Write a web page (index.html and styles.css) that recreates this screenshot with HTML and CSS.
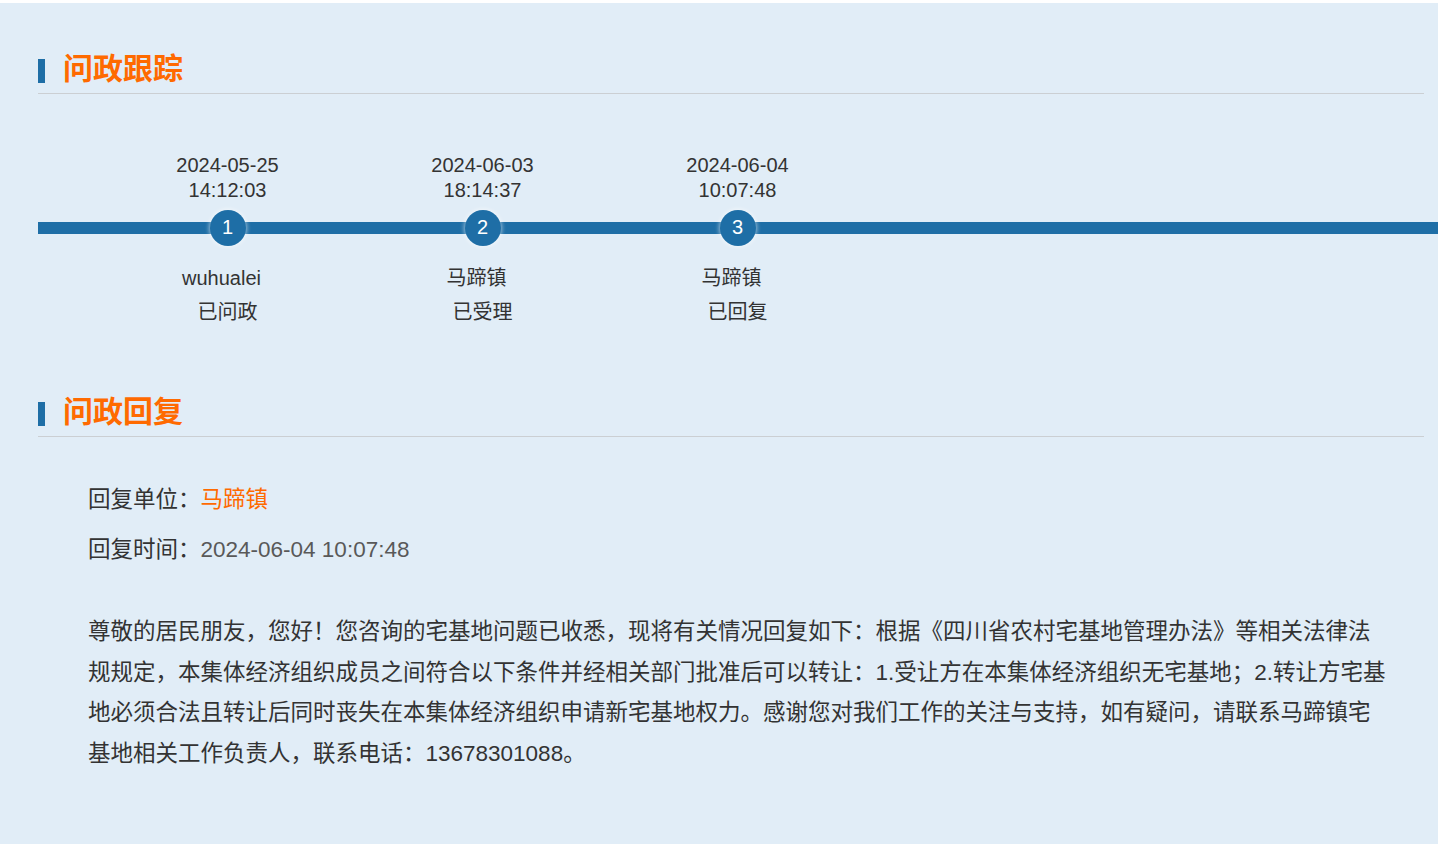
FILE: index.html
```html
<!DOCTYPE html>
<html lang="zh-CN">
<head>
<meta charset="utf-8">
<title>问政跟踪</title>
<link rel="stylesheet" href="styles.css">
</head>
<body>
<div class="page">
  <div class="section-head first">
    <span class="bar"></span>
    <h2 class="title">问政跟踪</h2>
  </div>

  <div class="timeline">
    <div class="step">
      <div class="date">2024-05-25<br>14:12:03</div>
      <div class="dot">1</div>
      <div class="name">wuhualei</div>
      <div class="status">已问政</div>
    </div>
    <div class="step">
      <div class="date">2024-06-03<br>18:14:37</div>
      <div class="dot">2</div>
      <div class="name">马蹄镇</div>
      <div class="status">已受理</div>
    </div>
    <div class="step">
      <div class="date">2024-06-04<br>10:07:48</div>
      <div class="dot">3</div>
      <div class="name">马蹄镇</div>
      <div class="status">已回复</div>
    </div>
  </div>

  <div class="section-head second">
    <span class="bar"></span>
    <h2 class="title">问政回复</h2>
  </div>

  <div class="reply">
    <div class="info-row"><span class="label">回复单位：</span><span class="unit">马蹄镇</span></div>
    <div class="info-row"><span class="label">回复时间：</span><span class="time">2024-06-04 10:07:48</span></div>
    <p class="content">尊敬的居民朋友，您好！您咨询的宅基地问题已收悉，现将有关情况回复如下：根据《四川省农村宅基地管理办法》等相关法律法规规定，本集体经济组织成员之间符合以下条件并经相关部门批准后可以转让：1.受让方在本集体经济组织无宅基地；2.转让方宅基地必须合法且转让后同时丧失在本集体经济组织申请新宅基地权力。感谢您对我们工作的关注与支持，如有疑问，请联系马蹄镇宅基地相关工作负责人，联系电话：13678301088。</p>
  </div>
</div>
</body>
</html>
```

FILE: styles.css
```css
html, body {
  margin: 0;
  padding: 0;
  background: #ffffff;
}

body {
  font-family: "Liberation Sans", "Noto Sans CJK SC", sans-serif;
  color: #333333;
}

.page {
  margin-top: 3px;
  width: 1438px;
  height: 841px;
  background: #e1edf7;
  overflow: hidden;
  padding-top: 46px;
  box-sizing: border-box;
}

.section-head {
  display: flex;
  align-items: flex-start;
  margin: 0 14px 0 38px;
  padding-bottom: 6px;
  border-bottom: 1px solid #cbcfd3;
}

.section-head.second {
  margin-top: 67px;
}

.bar {
  width: 7px;
  height: 24px;
  margin-top: 10px;
  background: #1e6ea6;
  flex: none;
}

.title {
  margin: 2px 0 0 18px;
  font-size: 30px;
  line-height: 36px;
  font-weight: 700;
  color: #ff6a00;
}

.timeline {
  display: flex;
  margin: 58px 0 0 38px;
  padding-left: 62px;
  background: linear-gradient(#1e6ea6, #1e6ea6) no-repeat 0 70px / 100% 12px;
}

.step {
  width: 255px;
  display: flex;
  flex-direction: column;
  align-items: center;
  text-align: center;
  font-size: 20px;
  line-height: 25px;
  color: #333333;
}

.date {
  margin-top: 1px;
}

.dot {
  width: 36px;
  height: 36px;
  margin-top: 7px;
  border-radius: 50%;
  background: #1e6ea6;
  color: #ffffff;
  font-size: 20px;
  line-height: 35px;
  box-shadow: 0 0 4px 1px rgba(255, 255, 255, 0.55);
}

.name {
  margin-top: 20px;
  padding-right: 12px;
}

.status {
  margin-top: 9px;
}

.reply {
  padding-left: 88px;
  margin-top: 38px;
  font-size: 22.5px;
}

.info-row {
  line-height: 50px;
}

.label {
  color: #333333;
}

.unit {
  color: #ff6a00;
}

.time {
  color: #595959;
}

.content {
  width: 1300px;
  margin: 37px 0 0 0;
  line-height: 40.6px;
  color: #333333;
}
```
